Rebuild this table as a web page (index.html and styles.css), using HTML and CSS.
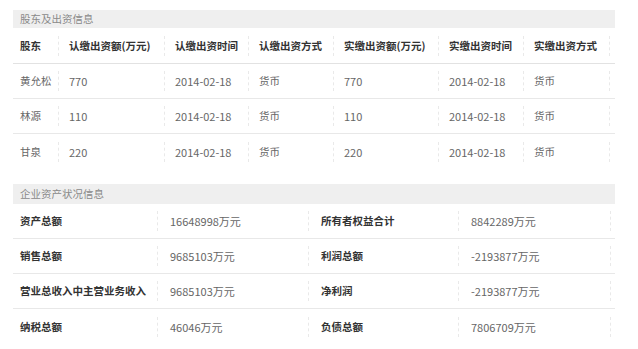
FILE: index.html
```html
<!DOCTYPE html>
<html lang="zh">
<head>
<meta charset="utf-8">
<link rel="stylesheet" href="styles.css">
</head>
<body>
<div class="page">
  <div class="section-title">股东及出资信息</div>
  <div class="t1 row head">
    <div class="c">股东</div>
    <div class="c d">认缴出资额(万元)</div>
    <div class="c d">认缴出资时间</div>
    <div class="c d">认缴出资方式</div>
    <div class="c d">实缴出资额(万元)</div>
    <div class="c d">实缴出资时间</div>
    <div class="c d last">实缴出资方式</div>
  </div>
  <div class="t1 row">
    <div class="c">黄允松</div>
    <div class="c d n">770</div>
    <div class="c d n">2014-02-18</div>
    <div class="c d">货币</div>
    <div class="c d n">770</div>
    <div class="c d n">2014-02-18</div>
    <div class="c d last">货币</div>
  </div>
  <div class="t1 row">
    <div class="c">林源</div>
    <div class="c d n">110</div>
    <div class="c d n">2014-02-18</div>
    <div class="c d">货币</div>
    <div class="c d n">110</div>
    <div class="c d n">2014-02-18</div>
    <div class="c d last">货币</div>
  </div>
  <div class="t1 row end">
    <div class="c">甘泉</div>
    <div class="c d n">220</div>
    <div class="c d n">2014-02-18</div>
    <div class="c d">货币</div>
    <div class="c d n">220</div>
    <div class="c d n">2014-02-18</div>
    <div class="c d last">货币</div>
  </div>

  <div class="section-title second">企业资产状况信息</div>
  <div class="t2 row">
    <div class="c k">资产总额</div>
    <div class="c d n">16648998万元</div>
    <div class="c d k">所有者权益合计</div>
    <div class="c d n">8842289万元</div>
    <div class="c d last"></div>
  </div>
  <div class="t2 row">
    <div class="c k">销售总额</div>
    <div class="c d n">9685103万元</div>
    <div class="c d k">利润总额</div>
    <div class="c d n">-2193877万元</div>
    <div class="c d last"></div>
  </div>
  <div class="t2 row">
    <div class="c k">营业总收入中主营业务收入</div>
    <div class="c d n">9685103万元</div>
    <div class="c d k">净利润</div>
    <div class="c d n">-2193877万元</div>
    <div class="c d last"></div>
  </div>
  <div class="t2 row end">
    <div class="c k">纳税总额</div>
    <div class="c d n">46046万元</div>
    <div class="c d k">负债总额</div>
    <div class="c d n">7806709万元</div>
    <div class="c d last"></div>
  </div>
</div>
</body>
</html>
```

FILE: styles.css
```css
html, body {
  margin: 0;
  padding: 0;
  background: #ffffff;
}

.page {
  width: 602px;
  margin-left: 13px;
  padding-top: 10px;
  font-family: "Noto Sans CJK SC", "Noto Sans", sans-serif;
  font-size: 10.5px;
  color: #666666;
}

.section-title {
  height: 18px;
  line-height: 18px;
  background: #efefef;
  color: #8a8a8a;
  padding-left: 7px;
}

.section-title.second {
  margin-top: 15px;
  height: 20px;
  line-height: 20px;
}

.row {
  display: grid;
  align-items: center;
  height: 34px;
  border-bottom: 1px solid #e8e8e8;
}

.row.end {
  border-bottom: none;
  height: 35px;
}

.row.head {
  height: 35px;
  border-bottom: 1px solid #e2e2e2;
  color: #333333;
  font-weight: bold;
}

.t1 {
  grid-template-columns: 45px 106px 84px 85px 105px 85px 92px;
}

.t2 {
  grid-template-columns: 144px 151px 150px 152px 5px;
}

.c {
  line-height: 20px;
  padding-left: 7px;
  white-space: nowrap;
}

.n {
  font-size: 11px;
}

.t1 .d {
  border-left: 1px dashed #e9e9e9;
  padding-left: 10px;
}

.t1 .last {
  border-right: 1px dashed #e9e9e9;
  margin-right: 5px;
}

.t2 .d {
  border-left: 1px dashed #e9e9e9;
  padding-left: 12px;
}

.t2 .last {
  padding-left: 0;
  height: 20px;
}

.k {
  color: #333333;
  font-weight: bold;
}
```
